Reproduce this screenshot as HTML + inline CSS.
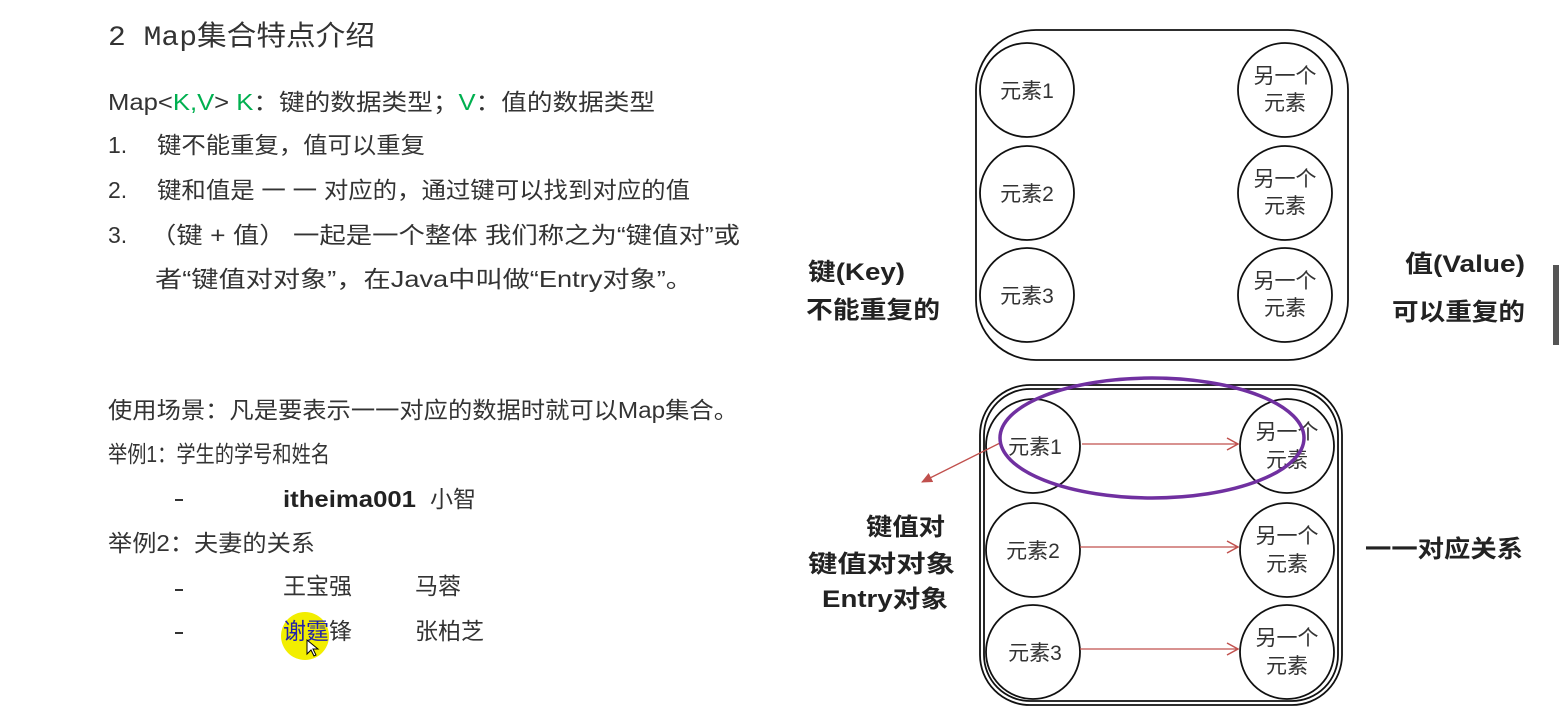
<!DOCTYPE html>
<html><head><meta charset="utf-8"><style>
html,body{margin:0;padding:0;background:#fff;width:1559px;height:718px;overflow:hidden}
svg{display:block}
text{font-family:"Liberation Sans","Noto Sans CJK SC",sans-serif;fill:#333}
.b{font-weight:bold;fill:#222}
</style></head><body>
<svg width="1559" height="718" viewBox="0 0 1559 718" xmlns="http://www.w3.org/2000/svg">
<defs><marker id="ar" markerWidth="14" markerHeight="14" refX="12" refY="7" orient="auto" markerUnits="userSpaceOnUse"><path d="M1,1 L12,7 L1,13" fill="none" stroke="#c0504d" stroke-width="1.5"/></marker>
<marker id="ar2" markerWidth="12" markerHeight="12" refX="10" refY="6" orient="auto" markerUnits="userSpaceOnUse"><path d="M0,1 L11,6 L0,11 Z" fill="#c0504d"/></marker></defs>
<g lengthAdjust="spacingAndGlyphs">
<text x="108" y="45" font-size="28" style="font-family:'Liberation Mono','Noto Sans CJK SC',monospace" textLength="267" lengthAdjust="spacingAndGlyphs">2 Map集合特点介绍</text>
<text x="108" y="110" font-size="23" textLength="547" lengthAdjust="spacingAndGlyphs">Map&lt;<tspan style="fill:#00b050">K,V</tspan>&gt;   <tspan style="fill:#00b050">K</tspan>：键的数据类型；<tspan style="fill:#00b050">V</tspan>：值的数据类型</text>
<text x="108" y="153" font-size="23">1.</text><text x="157" y="153" font-size="23" textLength="268" lengthAdjust="spacingAndGlyphs">键不能重复，值可以重复</text>
<text x="108" y="198" font-size="23">2.</text><text x="157" y="198" font-size="23" textLength="533" lengthAdjust="spacingAndGlyphs">键和值是 一 一 对应的，通过键可以找到对应的值</text>
<text x="108" y="243" font-size="23">3.</text><text x="150" y="243" font-size="23" textLength="590" lengthAdjust="spacingAndGlyphs">（键 + 值） 一起是一个整体 我们称之为“键值对”或</text>
<text x="155" y="287" font-size="23" textLength="538" lengthAdjust="spacingAndGlyphs">者“键值对对象”，在Java中叫做“Entry对象”。</text>
<text x="108" y="418" font-size="23" textLength="630" lengthAdjust="spacingAndGlyphs">使用场景：凡是要表示一一对应的数据时就可以Map集合。</text>
<text x="108" y="462" font-size="23" textLength="222" lengthAdjust="spacingAndGlyphs">举例1：学生的学号和姓名</text>
<rect x="175" y="499" width="8" height="2" fill="#333"/>
<text x="283" y="507" font-size="23" class="b" textLength="133" lengthAdjust="spacingAndGlyphs">itheima001</text>
<text x="430" y="507" font-size="23">小智</text>
<text x="108" y="551" font-size="23" textLength="207" lengthAdjust="spacingAndGlyphs">举例2：夫妻的关系</text>
<rect x="175" y="589" width="8" height="2" fill="#333"/>
<text x="283" y="594" font-size="23">王宝强</text><text x="415" y="594" font-size="23">马蓉</text>
<circle cx="305" cy="636" r="24" fill="#f2ee00"/>
<rect x="175" y="632" width="8" height="2" fill="#333"/>
<text x="283" y="639" font-size="23"><tspan style="fill:#2222aa">谢霆</tspan>锋</text><text x="415" y="639" font-size="23">张柏芝</text>
<path d="M307,640 l0,14 l4,-4 l3,6 l2,-1 l-3,-6 l5,0 z" fill="#fff" stroke="#000" stroke-width="1"/>
</g>
<g fill="none" stroke="#111" stroke-width="1.8">
<rect x="976" y="30" width="372" height="330" rx="60"/>
<circle cx="1027" cy="90" r="47"/><circle cx="1027" cy="193" r="47"/><circle cx="1027" cy="295" r="47"/>
<circle cx="1285" cy="90" r="47"/><circle cx="1285" cy="193" r="47"/><circle cx="1285" cy="295" r="47"/>
<rect x="980" y="385" width="362" height="320" rx="50"/>
<rect x="984" y="389" width="354" height="312" rx="46"/>
<circle cx="1033" cy="446" r="47"/><circle cx="1033" cy="550" r="47"/><circle cx="1033" cy="652" r="47"/>
<circle cx="1287" cy="446" r="47"/><circle cx="1287" cy="550" r="47"/><circle cx="1287" cy="652" r="47"/>
</g>
<g font-size="21" text-anchor="middle">
<text x="1027" y="98">元素1</text><text x="1027" y="201">元素2</text><text x="1027" y="303">元素3</text>
<text x="1285" y="83">另一个</text><text x="1285" y="110">元素</text>
<text x="1285" y="186">另一个</text><text x="1285" y="213">元素</text>
<text x="1285" y="288">另一个</text><text x="1285" y="315">元素</text>
<text x="1035" y="454">元素1</text><text x="1033" y="558">元素2</text><text x="1035" y="660">元素3</text>
<text x="1287" y="439">另一个</text><text x="1287" y="467">元素</text>
<text x="1287" y="543">另一个</text><text x="1287" y="571">元素</text>
<text x="1287" y="645">另一个</text><text x="1287" y="673">元素</text>
</g>
<g stroke="#c0504d" stroke-width="1.3" fill="none">
<line x1="1082" y1="444" x2="1238" y2="444" marker-end="url(#ar)"/>
<line x1="1080" y1="547" x2="1238" y2="547" marker-end="url(#ar)"/>
<line x1="1080" y1="649" x2="1238" y2="649" marker-end="url(#ar)"/>
<line x1="1000" y1="443" x2="922" y2="482" marker-end="url(#ar2)"/>
</g>
<ellipse cx="1152" cy="438" rx="152" ry="60" fill="none" stroke="#7030a0" stroke-width="3.5"/>
<g font-size="24">
<text x="808" y="280" class="b" textLength="97" lengthAdjust="spacingAndGlyphs">键(Key)</text>
<text x="806" y="318" class="b" textLength="134" lengthAdjust="spacingAndGlyphs">不能重复的</text>
<text x="1405" y="272" class="b" textLength="120" lengthAdjust="spacingAndGlyphs">值(Value)</text>
<text x="1392" y="320" class="b" textLength="133" lengthAdjust="spacingAndGlyphs">可以重复的</text>
<text x="866" y="535" class="b" textLength="79" lengthAdjust="spacingAndGlyphs">键值对</text>
<text x="808" y="572" class="b" textLength="147" lengthAdjust="spacingAndGlyphs">键值对对象</text>
<text x="822" y="607" class="b" textLength="126" lengthAdjust="spacingAndGlyphs">Entry对象</text>
<text x="1365" y="557" class="b" textLength="158" lengthAdjust="spacingAndGlyphs">一一对应关系</text>
</g>
<rect x="1553" y="265" width="6" height="80" fill="#555"/>
</svg>
</body></html>
